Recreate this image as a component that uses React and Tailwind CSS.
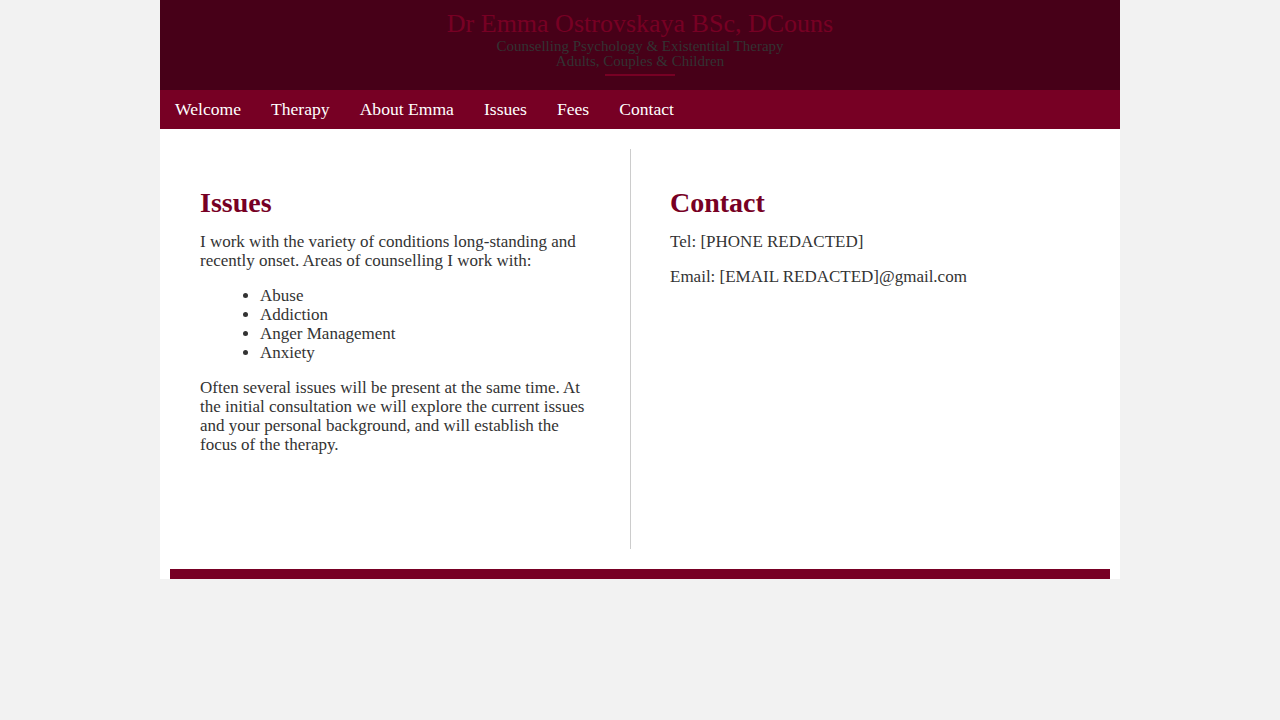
import React from 'react';

const serif = "font-['Liberation_Serif',Georgia,serif]";

const navItems = ['Welcome', 'Therapy', 'About Emma', 'Issues', 'Fees', 'Contact'];

const issues = ['Abuse', 'Addiction', 'Anger Management', 'Anxiety'];

export default function App() {
    return (
        <div className={`min-h-[720px] bg-[#f2f2f2] ${serif}`}>
            <div className="mx-auto w-[960px] bg-white">
                <header className="h-[90px] bg-[#470018] flex flex-col items-center pt-[9px]">
                    <h1 className="text-[26px] leading-[29px] text-[#770024]">Dr Emma Ostrovskaya BSc, DCouns</h1>
                    <p className="text-[15px] leading-[16px] text-[#333]">Counselling Psychology &amp; Existentital Therapy</p>
                    <p className="text-[15px] leading-[15px] text-[#333]">Adults, Couples &amp; Children</p>
                    <div className="mt-[5px] w-[70px] h-[2px] bg-[#770024]" />
                </header>

                <nav className="h-[39px] bg-[#770024] flex items-center px-[15px] gap-[30px]">
                    {navItems.map((item) => (
                        <a key={item} href="#" className="text-[17.6px] text-white">
                            {item}
                        </a>
                    ))}
                </nav>

                <main className="flex py-[20px] text-[17px] leading-[19px] text-[#333]">
                    <section className="w-[471px] min-h-[400px] border-r border-[#ccc] px-[40px] pt-[40px]">
                        <h2 className="text-[28px] leading-[28px] font-bold text-[#770024] mb-[15px]">Issues</h2>
                        <p>I work with the variety of conditions long-standing and recently onset. Areas of counselling I work with:</p>
                        <ul className="list-disc pl-[60px] my-[16px]">
                            {issues.map((issue) => (
                                <li key={issue}>{issue}</li>
                            ))}
                        </ul>
                        <p>Often several issues will be present at the same time. At the initial consultation we will explore the current issues and your personal background, and will establish the focus of the therapy.</p>
                    </section>
                    <section className="flex-1 pl-[39px] pr-[40px] pt-[40px]">
                        <h2 className="text-[28px] leading-[28px] font-bold text-[#770024] mb-[15px]">Contact</h2>
                        <p className="mb-[16px]">Tel: [PHONE REDACTED]</p>
                        <p>Email: [EMAIL REDACTED]@gmail.com</p>
                    </section>
                </main>

                <div className="px-[10px] pb-0">
                    <div className="h-[10px] bg-[#770024]" />
                </div>
            </div>
        </div>
    );
}
